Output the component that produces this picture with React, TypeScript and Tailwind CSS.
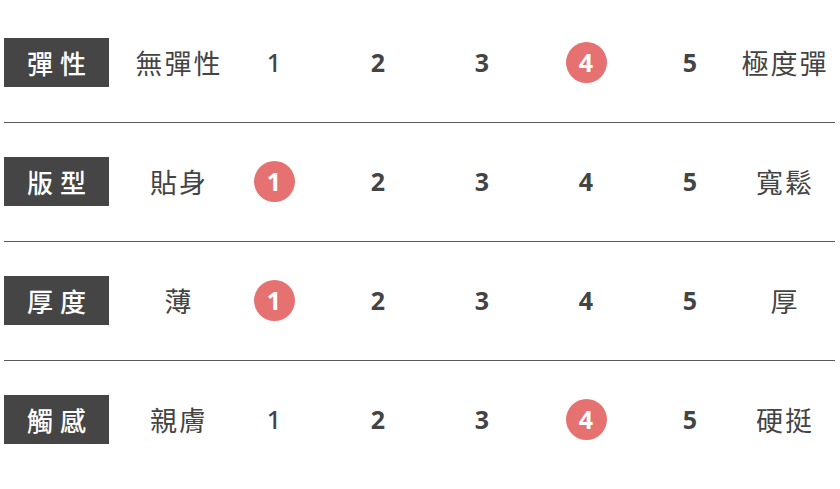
import React from "react";

type Row = {
  label: string;
  low: string;
  high: string;
  value: number;
};

const rows: Row[] = [
  { label: "彈性", low: "無彈性", high: "極度彈", value: 4 },
  { label: "版型", low: "貼身", high: "寬鬆", value: 1 },
  { label: "厚度", low: "薄", high: "厚", value: 1 },
  { label: "觸感", low: "親膚", high: "硬挺", value: 4 },
];

const font = {
  fontFamily:
    '"Noto Sans CJK TC", "Noto Sans", "Liberation Sans", sans-serif',
};

const digitFont = {
  fontFamily: '"Noto Sans", "Open Sans", sans-serif',
};

function Scale({ row, last }: { row: Row; last: boolean }) {
  return (
    <div
      className={`flex items-center pt-[34px] pb-[35px] ${
        last ? "" : "border-b border-[#5a5a5a]"
      }`}
    >
      <div className="w-[105px] h-[49px] bg-[#454545] flex items-center justify-center">
        <span className="text-white text-[26px] font-medium tracking-[7px] pl-[7px] leading-none">
          {row.label}
        </span>
      </div>
      <div className="w-[113px] pl-[25px] flex justify-center">
        <span className="text-[#444] text-[27px] tracking-[2px] pl-[2px] whitespace-nowrap leading-none">
          {row.low}
        </span>
      </div>
      {[1, 2, 3, 4, 5].map((n) => (
        <div
          key={n}
          className="w-[104px] flex justify-center items-center"
          style={digitFont}
        >
          {n === row.value ? (
            <div className="w-[41px] h-[41px] rounded-full bg-[#e57171] flex items-center justify-center text-white text-[25px] font-bold leading-none">
              {n}
            </div>
          ) : (
            <span
              className={`text-[#444] text-[25px] leading-none ${
                n === 1 && row.value === 4 ? "font-medium" : "font-bold"
              }`}
            >
              {n}
            </span>
          )}
        </div>
      ))}
      <div className="w-[84px] flex justify-center">
        <span className="text-[#444] text-[27px] tracking-[2px] pl-[2px] whitespace-nowrap leading-none">
          {row.high}
        </span>
      </div>
    </div>
  );
}

export default function App() {
  return (
    <div className="w-[840px] h-[489px] bg-white overflow-hidden" style={font}>
      <div className="pt-[4px] pl-[4px] pr-[5px]">
        {rows.map((row, i) => (
          <Scale key={row.label} row={row} last={i === rows.length - 1} />
        ))}
      </div>
    </div>
  );
}
